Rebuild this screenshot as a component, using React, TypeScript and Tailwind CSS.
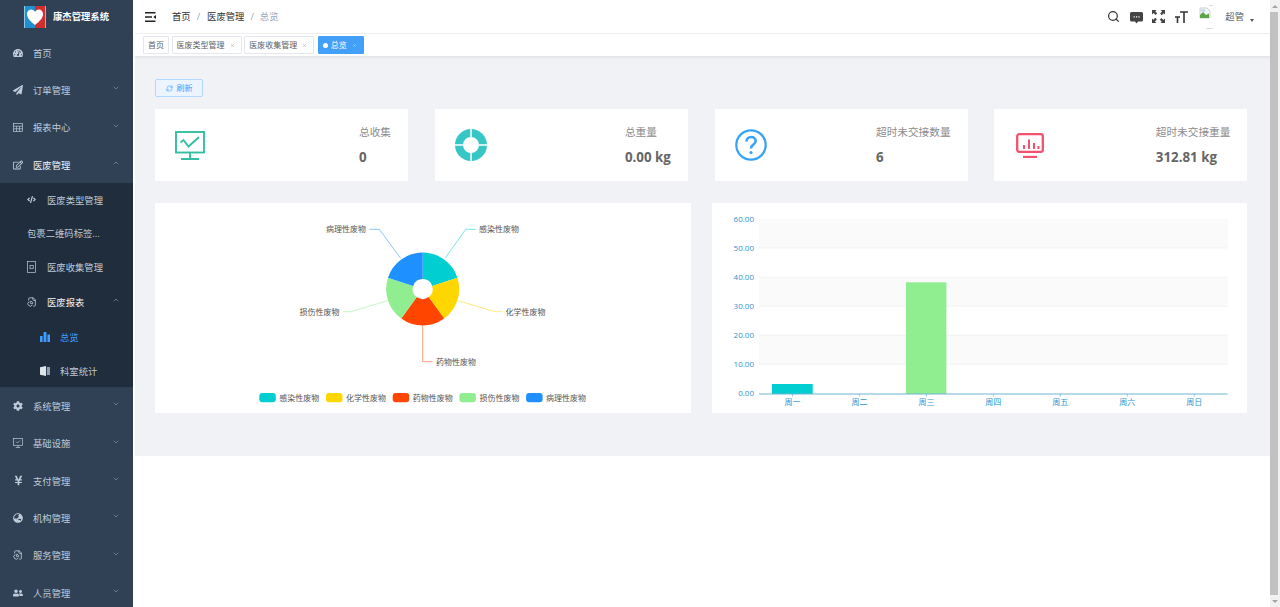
import React from "react";
import { ChevronDown, ChevronUp, Search, RefreshCw, X } from "lucide-react";
import {
  FaTachometerAlt, FaPaperPlane, FaRegEdit, FaCode, FaCog, FaYenSign, FaGlobeAsia, FaUserFriends,
} from "react-icons/fa";
import { LuFileChartPie } from "react-icons/lu";

const TableIcon = () => (
  <svg width="10" height="9" viewBox="0 0 10 9" fill="none" stroke="currentColor" strokeWidth="0.7">
    <rect x="0.5" y="0.5" width="9" height="8" />
    <path d="M0.5 3.2h9M0.5 5.8h9M3.5 3.2v5.3M6.5 3.2v5.3" />
  </svg>
);
const ScreenIcon = () => (
  <svg width="10" height="10" viewBox="0 0 10 10" fill="none" stroke="currentColor" strokeWidth="0.7">
    <rect x="0.5" y="0.5" width="9" height="6.8" />
    <path d="M3 3.5l1.5 1.5 2.5-2.5M5 7.3v2M2.8 9.5h4.4" />
  </svg>
);
const FileIcon = () => (
  <svg width="9" height="12" viewBox="0 0 9 12" fill="none" stroke="currentColor" strokeWidth="0.7">
    <rect x="0.5" y="0.5" width="8" height="11" />
    <rect x="3" y="4.5" width="3.2" height="3.2" />
  </svg>
);
const BarsIcon = () => (
  <svg width="10" height="10" viewBox="0 0 10 10" fill="currentColor">
    <rect x="0" y="4" width="2.6" height="6" />
    <rect x="3.6" y="0" width="2.8" height="10" />
    <rect x="7.4" y="2.5" width="2.6" height="7.5" />
  </svg>
);
const BookIcon = () => (
  <svg width="10" height="10" viewBox="0 0 10 10">
    <path d="M0 1.2L6 0v10L0 8.8z" fill="#dfe5ec" />
    <path d="M6.8 1h3.2v8H6.8z" fill="#8e9cab" />
  </svg>
);

const Top = ({ icon, label, open, active, arrow = true }: { icon: React.ReactNode; label: string; open?: boolean; active?: boolean; arrow?: boolean }) => (
  <div className="flex items-center h-[37.33px] pl-[13px] pr-[13px] shrink-0">
    <span className="w-[20px] flex text-[#bfcbd9] text-[10px]">{icon}</span>
    <span className={`flex-1 pt-[2px] text-[9.33px] ${active ? "text-[#f4f4f5]" : "text-[#bfcbd9]"}`}>{label}</span>
    {arrow && (open ? <ChevronUp size={8} className="text-[#909399] -mt-[3px]" /> : <ChevronDown size={8} className="text-[#909399] -mt-[3px]" />)}
  </div>
);

const Sub = ({ icon, label }: { icon?: React.ReactNode; label: string }) => (
  <div className="flex items-center h-[33.33px] pl-[27px] shrink-0">
    {icon && <span className="w-[20px] flex text-[#bfcbd9] text-[9px]">{icon}</span>}
    <span className="pt-[2px] text-[9.33px] text-[#bfcbd9]">{label}</span>
  </div>
);

const Third = ({ icon, label, active }: { icon: React.ReactNode; label: string; active?: boolean }) => (
  <div className="flex items-center h-[33.33px] pl-[40px] shrink-0">
    <span className={`w-[20px] flex text-[10px] ${active ? "text-[#409eff]" : "text-[#bfcbd9]"}`}>{icon}</span>
    <span className={`pt-[2px] text-[9.33px] ${active ? "text-[#409eff]" : "text-[#bfcbd9]"}`}>{label}</span>
  </div>
);

const Sidebar = () => (
  <aside className="w-[133px] shrink-0 h-full bg-[#304156] flex flex-col overflow-hidden">
    <div className="h-[34px] shrink-0 flex items-center pl-[24px]">
      <svg width="22" height="22" viewBox="0 0 22 22" className="mr-[7px]">
        <rect width="22" height="22" fill="#fff" />
        <rect x="0.5" width="10.5" height="22" fill="#1f8fd0" />
        <rect x="11" width="10.5" height="22" fill="#d12f2f" />
        <path d="M11 19 C6 15 3 12 3 8 C3 5 5 3.4 7.2 3.4 C9 3.4 10.3 4.4 11 5.8 C11.7 4.4 13 3.4 14.8 3.4 C17 3.4 19 5 19 8 C19 12 16 15 11 19 Z" fill="#fff" />
      </svg>
      <span className="text-[9.33px] font-bold text-white">康杰管理系统</span>
    </div>
    <Top icon={<FaTachometerAlt />} label="首页" arrow={false} />
    <Top icon={<FaPaperPlane />} label="订单管理" />
    <Top icon={<TableIcon />} label="报表中心" />
    <Top icon={<FaRegEdit />} label="医废管理" open active />
    <div className="bg-[#1f2d3d] flex flex-col shrink-0">
      <Sub icon={<FaCode />} label="医废类型管理" />
      <Sub label="包裹二维码标签..." />
      <Sub icon={<FileIcon />} label="医废收集管理" />
      <div className="flex items-center h-[37.33px] pl-[27px] pr-[13px]">
        <span className="w-[20px] flex text-[#bfcbd9]"><LuFileChartPie size={10} /></span>
        <span className="flex-1 pt-[2px] text-[9.33px] text-[#f4f4f5]">医废报表</span>
        <ChevronUp size={8} className="text-[#909399] -mt-[3px]" />
      </div>
      <Third icon={<BarsIcon />} label="总览" active />
      <Third icon={<BookIcon />} label="科室统计" />
    </div>
    <Top icon={<FaCog />} label="系统管理" />
    <Top icon={<ScreenIcon />} label="基础设施" />
    <Top icon={<FaYenSign size={11} />} label="支付管理" />
    <Top icon={<FaGlobeAsia />} label="机构管理" />
    <Top icon={<LuFileChartPie size={10} />} label="服务管理" />
    <Top icon={<FaUserFriends />} label="人员管理" />
  </aside>
);

const Header = () => (
  <header className="h-[34px] shrink-0 flex items-center pl-[10px] pr-[16px] border-b border-[#f0f0f0] bg-white">
    <svg width="11" height="10" viewBox="0 0 11 10" className="mr-[16px]">
      <path d="M0 0.8h10.5M0 5h7M0 9.2h10.5" stroke="#222" strokeWidth="1.5" />
      <path d="M11 3v4L8.3 5z" fill="#222" />
    </svg>
    <span className="text-[9.33px] text-[#303133]">首页</span>
    <span className="text-[9.33px] text-[#97a8be] mx-[6px]">/</span>
    <span className="text-[9.33px] text-[#303133] ml-[1px]">医废管理</span>
    <span className="text-[9.33px] text-[#97a8be] mx-[6px]">/</span>
    <span className="text-[9.33px] text-[#97a8be]">总览</span>
    <div className="flex-1" />
    <Search size={13} strokeWidth={2.2} className="text-[#333] mr-[10px]" />
    <svg width="13" height="12" viewBox="0 0 13 12" className="mr-[9px] mt-[2px]">
      <path d="M1.5 0h10A1.5 1.5 0 0 1 13 1.5v6.5A1.5 1.5 0 0 1 11.5 9.5H8L6.5 11.5 5 9.5H1.5A1.5 1.5 0 0 1 0 8V1.5A1.5 1.5 0 0 1 1.5 0z" fill="#444" />
      <path d="M3.6 4.8h1.2M6 4.8h1.2M8.4 4.8h1.2" stroke="#fff" strokeWidth="1.2" />
    </svg>
    <svg width="13" height="13" viewBox="0 0 13 13" className="mr-[10px]" fill="#444">
      <path d="M0 0h4.5L3.2 1.3l2 2-1.6 1.6-2-2L0 4.5zM13 0v4.5l-1.3-1.3-2 2L8.1 3.6l2-2L8.5 0zM0 13V8.5l1.3 1.3 2-2 1.6 1.6-2 2L4.5 13zM13 13H8.5l1.3-1.3-2-2 1.6-1.6 2 2L13 8.5z" />
    </svg>
    <svg width="13" height="12" viewBox="0 0 13 12" className="mr-[11px]" fill="none" stroke="#333" strokeWidth="1.6">
      <path d="M5 1h8M9 1v11M0 6h5M2.5 6v6" />
    </svg>
    <div className="w-[14px] h-[24px] relative mr-[12px]">
      <svg width="12" height="12" viewBox="0 0 12 12" className="absolute left-0 top-[2px]">
        <path d="M1 1h7l3 3v7H1z" fill="#f4f8fa" stroke="#bbb" strokeWidth="0.7" />
        <path d="M1 8l3-3 3 3 3-1.5V11H1z" fill="#5aa546" />
        <path d="M2 2.5h4v2H2z" fill="#bcd4ee" />
      </svg>
      <span className="absolute right-0 bottom-0 w-[7px] h-px bg-[#ddd]" />
      <span className="absolute right-0 top-0 w-[4px] h-px bg-[#ddd]" />
    </div>
    <span className="text-[9.33px] text-[#606266]">超管</span>
    <span className="ml-[6px] mt-[7px] w-0 h-0 border-x-[2.5px] border-x-transparent border-t-[3px] border-t-[#555]" />
  </header>
);

const Tag = ({ label, active }: { label: string; active?: boolean }) => (
  <div className={`h-[18px] flex items-center px-[4px] rounded-[1px] border text-[8px] ${active ? "bg-[#42a0f8] border-[#42a0f8] text-white" : "bg-white border-[#e4e7ed] text-[#606266]"}`}>
    {active && <span className="w-[5px] h-[5px] rounded-full bg-white mr-[3px]" />}
    <span>{label}</span>
    {label !== "首页" && <X size={5} className="ml-[5px] mr-[2px] opacity-70" />}
  </div>
);

const TagsBar = () => (
  <div className="h-[23px] shrink-0 flex items-center pl-[8px] gap-[2.6px] bg-white border-b border-[#e4e6ea] shadow-[0_1px_3px_rgba(0,0,0,0.06)] relative">
    <Tag label="首页" />
    <Tag label="医废类型管理" />
    <Tag label="医废收集管理" />
    <div className="ml-[1px]"><Tag label="总览" active /></div>
  </div>
);

const Stat = ({ icon, title, value }: { icon: React.ReactNode; title: string; value: string }) => (
  <div className="h-[72px] bg-white flex items-center justify-between pl-[20px] pr-[17px]">
    {icon}
    <div className="flex flex-col">
      <span className="text-[10.67px] leading-[14px] text-[#8c8c8c] mb-[11px] -mt-[1px]">{title}</span>
      <span className="text-[13.33px] leading-[14px] font-bold text-[#666]">{value}</span>
    </div>
  </div>
);

const slice = (a0: number, a1: number, R: number, r: number, cx: number, cy: number) => {
  const p = (a: number, q: number) => {
    const t = (a * Math.PI) / 180;
    return `${cx + q * Math.sin(t)} ${cy - q * Math.cos(t)}`;
  };
  return `M${p(a0, r)}L${p(a0, R)}A${R} ${R} 0 0 1 ${p(a1, R)}L${p(a1, r)}A${r} ${r} 0 0 0 ${p(a0, r)}Z`;
};

const pieData = [
  { name: "感染性废物", c: "#00ced1", line: "445,258.3 465.7,229.3 476,229.3", x: 479, y: 229.3, a: "start" },
  { name: "化学性废物", c: "#ffd700", line: "458.3,300.7 495,311.7 502.7,311.7", x: 505.5, y: 311.7, a: "start" },
  { name: "药物性废物", c: "#ff4500", line: "422.7,325.7 422.7,361.7 432.7,361.7", x: 436, y: 361.7, a: "start" },
  { name: "损伤性废物", c: "#90ee90", line: "387.3,300.7 351,311.7 343.3,311.7", x: 339.5, y: 311.7, a: "end" },
  { name: "病理性废物", c: "#1e90ff", line: "400.7,258.3 379.3,229.3 369.3,229.3", x: 366, y: 229.3, a: "end" },
];

const Pie = () => (
  <div className="bg-white h-[210px]">
    <svg viewBox="155 203 536 210" className="block w-full h-full">
      {pieData.map((d, i) => (
        <g key={d.name}>
          <path d={slice(i * 72, (i + 1) * 72, 36.5, 10, 422.7, 289)} fill={d.c} />
          <polyline points={d.line} fill="none" stroke={d.c} strokeOpacity="0.75" strokeWidth="0.7" />
          <text x={d.x} y={d.y + 3} fontSize="8" fill="#555" textAnchor={d.a as "start" | "end"}>{d.name}</text>
          <rect x={259.3 + i * 66.7} y={393} width="16.5" height="9.3" rx="3" fill={d.c} />
          <text x={279.3 + i * 66.7} y={400.6} fontSize="8" fill="#555">{d.name}</text>
        </g>
      ))}
    </svg>
  </div>
);

const ys = [219, 248, 277.3, 306.3, 335.3, 364.3, 394];
const yLabels = ["60.00", "50.00", "40.00", "30.00", "20.00", "10.00", "0.00"];
const days = ["周一", "周二", "周三", "周四", "周五", "周六", "周日"];
const L = 759, Rt = 1227.7;
const step = (Rt - L) / 7;

const Bars = () => (
  <div className="bg-white h-[210px]">
    <svg viewBox="712 203 535 210" className="block w-full h-full">
      {[0, 2, 4].map((i) => (
        <rect key={i} x={L} y={ys[i]} width={Rt - L} height={ys[i + 1] - ys[i]} fill="#fafafa" />
      ))}
      {ys.slice(1, 6).map((y) => (
        <line key={y} x1={L} x2={Rt} y1={y} y2={y} stroke="#efefef" strokeWidth="0.7" />
      ))}
      {yLabels.map((t, i) => (
        <text key={t} x={754} y={ys[i] + (i === 6 ? 2 : 3)} fontSize="8" fill="#2f95cf" textAnchor="end">{t}</text>
      ))}
      <rect x={772} y={384} width={40.7} height={10} fill="#00ced1" />
      <rect x={906} y={282.3} width={40.4} height={111.7} fill="#90ee90" />
      <line x1={L} x2={Rt} y1={394} y2={394} stroke="#6fb5d3" strokeWidth="1" />
      {days.map((d, i) => {
        const x = L + step * (i + 0.5);
        return (
          <g key={d}>
            <line x1={x} x2={x} y1={394} y2={396.5} stroke="#6fb5d3" strokeWidth="0.7" />
            <text x={x} y={405} fontSize="8" fill="#2f95cf" textAnchor="middle">{d}</text>
          </g>
        );
      })}
    </svg>
  </div>
);

const Scrollbar = () => (
  <div className="w-[10px] h-full shrink-0 bg-[#f1f1f1] flex flex-col">
    <div className="h-[12px] flex items-center justify-center shrink-0">
      <span className="w-0 h-0 border-x-[3px] border-x-transparent border-b-[3px] border-b-[#a3a3a3]" />
    </div>
    <div className="flex-1 w-[8px] bg-[#c1c1c1]" />
    <div className="h-[12px] flex items-center justify-center shrink-0">
      <span className="w-0 h-0 border-x-[3px] border-x-transparent border-t-[3px] border-t-[#a3a3a3]" />
    </div>
  </div>
);

export default function App() {
  return (
    <div className="w-[1280px] h-[607px] overflow-hidden flex bg-white font-['Open_Sans','Noto_Sans_CJK_SC',sans-serif]">
      <Sidebar />
      <main className="flex-1 min-w-0 h-full flex flex-col pl-[2px]">
        <Header />
        <TagsBar />
        <section className="h-[399px] shrink-0 bg-[#f0f2f5] pl-[20px] pr-[23px] pt-[22px]">
          <button className="h-[18px] w-[48px] flex items-center justify-center gap-[4px] rounded-[2px] bg-[#ecf5ff] border border-[#b3d8ff] text-[#409eff] text-[8px]">
            <RefreshCw size={7} />
            <span>刷新</span>
          </button>
          <div className="grid grid-cols-[253px_253px_253px_253px] gap-x-[26.8px] mt-[12px]">
            <Stat
              title="总收集"
              value="0"
              icon={
                <svg width="30" height="29" viewBox="0 0 30 29" fill="none" stroke="#34bfa3" strokeWidth="1.9">
                  <rect x="1" y="1" width="28" height="20.5" />
                  <path d="M5.5 11.5l3-2.5 5 6.5 10.5-9.5" />
                  <path d="M15 21.5v6M6 28h18" />
                </svg>
              }
            />
            <Stat
              title="总重量"
              value="0.00 kg"
              icon={
                <svg width="32" height="32" viewBox="0 0 32 32" fill="none">
                  <circle cx="16" cy="16" r="12" stroke="#36c6c6" strokeWidth="8" />
                  <path d="M16 0v8M16 24v8M0 16h8M24 16h8" stroke="#fff" strokeWidth="1.5" />
                </svg>
              }
            />
            <Stat
              title="超时未交接数量"
              value="6"
              icon={
                <svg width="32" height="32" viewBox="0 0 32 32" fill="none" stroke="#36a3f7" strokeWidth="2.2">
                  <circle cx="16" cy="16" r="14.7" />
                  <path d="M11.5 12.5c0-2.8 2-4.5 4.7-4.5 2.6 0 4.5 1.7 4.5 4 0 3.6-4.7 3.5-4.7 7.5" strokeWidth="2.6" />
                  <circle cx="16" cy="23.5" r="1.6" fill="#36a3f7" stroke="none" />
                </svg>
              }
            />
            <Stat
              title="超时未交接重量"
              value="312.81 kg"
              icon={
                <svg width="28" height="25" viewBox="0 0 28 25" fill="none" stroke="#f4516c" strokeWidth="2.3" className="ml-[2px]">
                  <rect x="1.2" y="1.2" width="25.6" height="17.6" rx="2" />
                  <path d="M8 16v-4M13 16V6.5M18 16v-6M22.5 16v-3" strokeWidth="2" />
                  <path d="M7 24h14" />
                </svg>
              }
            />
          </div>
          <div className="grid grid-cols-[536px_535px] gap-x-[21px] mt-[22px]">
            <Pie />
            <Bars />
          </div>
        </section>
      </main>
      <Scrollbar />
    </div>
  );
}
